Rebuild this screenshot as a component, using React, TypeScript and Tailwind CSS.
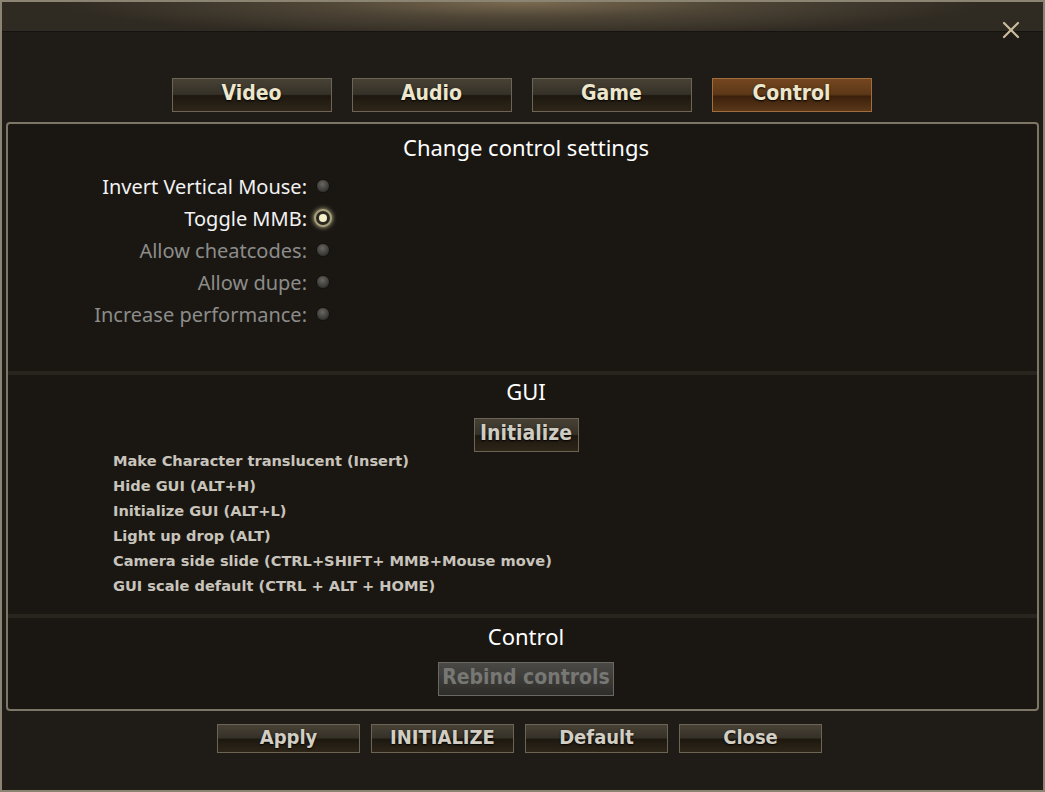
import React from "react";

const tabs = ["Video", "Audio", "Game", "Control"];

const settings = [
	{ label: "Invert Vertical Mouse:", enabled: true, on: false },
	{ label: "Toggle MMB:", enabled: true, on: true },
	{ label: "Allow cheatcodes:", enabled: false, on: false },
	{ label: "Allow dupe:", enabled: false, on: false },
	{ label: "Increase performance:", enabled: false, on: false },
];

const hotkeys = [
	"Make Character translucent (Insert)",
	"Hide GUI (ALT+H)",
	"Initialize GUI (ALT+L)",
	"Light up drop (ALT)",
	"Camera side slide (CTRL+SHIFT+ MMB+Mouse move)",
	"GUI scale default (CTRL + ALT + HOME)",
];

const Radio: React.FC<{ on: boolean }> = ({ on }) =>
	on ? (
		<div className="w-[18px] h-[18px] rounded-full border-[2px] border-[#a8a27c] bg-[#2a2820] shadow-[0_0_5px_#d8d2a0] flex items-center justify-center">
			<div className="w-[8px] h-[8px] rounded-full bg-[#f4f0c8]"></div>
		</div>
	) : (
		<div className="w-[14px] h-[14px] rounded-full border border-[#141210] bg-[radial-gradient(circle_at_45%_35%,#6a6762_0%,#3e3c38_60%,#2a2825_100%)]"></div>
	);

const btn =
	"border border-[#6c6454] bg-[linear-gradient(to_bottom,#474135_0%,#363128_48%,#1d1810_52%,#2e2518_100%)] font-['DejaVu_Sans_Condensed','DejaVu_Sans',sans-serif] font-bold [text-shadow:0_1px_2px_#000]";

export default function App() {
	return (
		<div className="relative w-[1045px] h-[792px] border-[2px] border-[#8c8473] bg-[#1f1c18] flex flex-col overflow-hidden">
			<div className="h-[30px] shrink-0 bg-[radial-gradient(ellipse_45%_120%_at_50%_0%,#7a6a50_0%,#4e4536_45%,#2f2a22_100%)] border-b border-[#151310]"></div>

			<button className="absolute top-[18px] right-[22px] w-[20px] h-[20px]">
				<svg viewBox="0 0 20 20" width="20" height="20">
					<path d="M3 3 L17 17 M17 3 L3 17" stroke="#cbbd9c" strokeWidth="2.2" strokeLinecap="round" />
				</svg>
			</button>

			<div className="flex justify-center gap-[20px] mt-[46px] ml-[-2px]">
				{tabs.map((t) => (
					<div
						key={t}
						className={
							t === "Control"
								? "w-[160px] h-[34px] pb-[2px] flex items-center justify-center border border-[#a06e3e] bg-[linear-gradient(to_bottom,#74461f_0%,#5d3818_48%,#3c200c_54%,#5a3819_100%)] text-[21px] text-[#ece6cc] font-['DejaVu_Sans_Condensed','DejaVu_Sans',sans-serif] font-bold [text-shadow:0_1px_2px_#000]"
								: "w-[160px] h-[34px] pb-[2px] flex items-center justify-center text-[21px] text-[#ece6cc] " + btn
						}
					>
						{t}
					</div>
				))}
			</div>

			<div className="mt-[10px] mx-[4px] h-[589px] border-[2px] border-[#7d7565] rounded-[4px] bg-[#1a1713] flex flex-col font-['Noto_Sans',sans-serif]">
				<div className="pt-[7px] pl-[7px] text-[22px] leading-[32px] text-white text-center">Change control settings</div>

				<div className="mt-[7px] flex flex-col">
					{settings.map((s) => (
						<div key={s.label} className="flex items-center h-[32px]">
							<div
								className={
									"w-[299px] text-right text-[20px] pt-[2px] " +
									(s.enabled ? "text-[#f2f2f2]" : "text-[#8c8c8a]")
								}
							>
								{s.label}
							</div>
							<div className="w-[30px] flex justify-center ml-[1px]">
								<Radio on={s.on} />
							</div>
						</div>
					))}
				</div>

				<div className="mt-[41px] h-[4px] bg-[#28241e]"></div>

				<div className="pt-[1px] pl-[7px] text-[22px] leading-[30px] text-white text-center">GUI</div>
				<div className="flex justify-center mt-[12px] pl-[7px]">
					<div className={"w-[105px] h-[34px] pb-[2px] flex items-center justify-center text-[21px] text-[#cfccc2] " + btn}>
						Initialize
					</div>
				</div>

				<div className="mt-[-4px] pl-[105px] flex flex-col font-['DejaVu_Sans',sans-serif] font-bold text-[14.6px] text-[#c8c4bb]">
					{hotkeys.map((h) => (
						<div key={h} className="h-[25px] leading-[25px]">
							{h}
						</div>
					))}
				</div>

				<div className="mt-[16px] h-[4px] bg-[#28241e]"></div>

				<div className="pt-[3px] pl-[7px] text-[22px] leading-[30px] text-white text-center">Control</div>
				<div className="flex justify-center mt-[11px] pl-[7px]">
					<div className="w-[176px] h-[34px] pb-[2px] flex items-center justify-center border border-[#6a6862] bg-[linear-gradient(to_bottom,#4a4946_0%,#3c3b38_50%,#2e2d2a_100%)] text-[21px] text-[#777774] font-['DejaVu_Sans_Condensed','DejaVu_Sans',sans-serif] font-bold">
						Rebind controls
					</div>
				</div>
			</div>

			<div className="flex justify-center gap-[11px] mt-[13px] ml-[-6px]">
				{["Apply", "INITIALIZE", "Default", "Close"].map((b) => (
					<div key={b} className={"w-[143px] h-[29px] pb-[3px] flex items-center justify-center text-[20px] text-[#d2cec3] " + btn}>
						{b}
					</div>
				))}
			</div>
		</div>
	);
}
